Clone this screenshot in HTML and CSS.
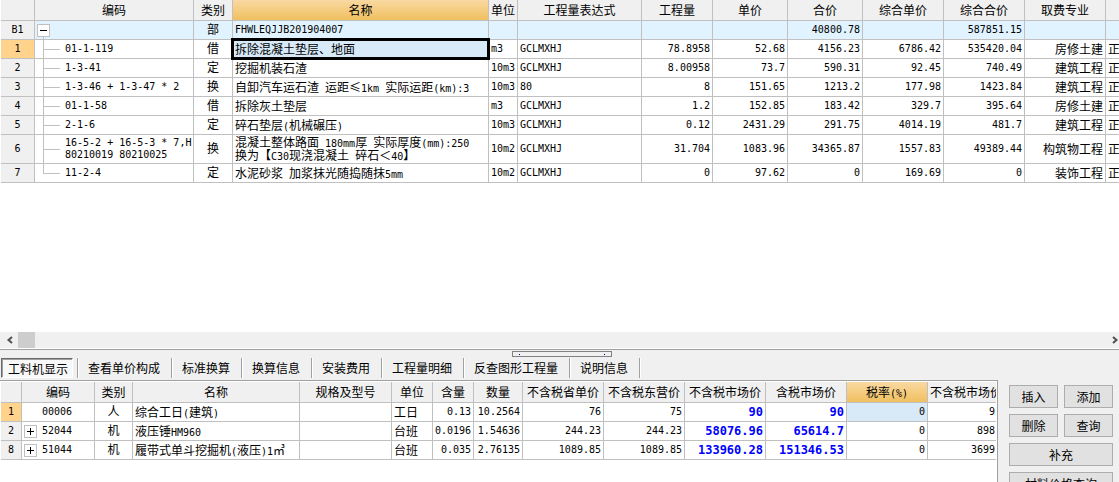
FILE: index.html
```html
<!DOCTYPE html>
<html lang="zh-CN">
<head>
<meta charset="utf-8">
<title>工程量清单</title>
<link rel="stylesheet" href="styles.css">
</head>
<body>
<main class="app">
  <section class="upper">
    <table class="grid">
      <colgroup><col class="w34"><col class="w159"><col class="w39"><col class="w256"><col class="w29"><col class="w124"><col class="w71"><col class="w75"><col class="w75"><col class="w81"><col class="w81"><col class="w81"><col></colgroup>
      <thead>
        <tr><th></th><th>编码</th><th>类别</th><th class="hot">名称</th><th>单位</th><th>工程量表达式</th><th>工程量</th><th>单价</th><th>合价</th><th>综合单价</th><th>综合合价</th><th>取费专业</th><th></th></tr>
      </thead>
      <tbody>
        <tr class="group"><th>B1</th><td class="tree root"><button class="toggle" aria-label="折叠"><svg viewBox="0 0 11 11"><path d="M2 5.5h7"/></svg></button></td><td class="kind">部</td><td>FHWLEQJJB201904007</td><td></td><td></td><td></td><td></td><td class="num">40800.78</td><td></td><td class="num">587851.15</td><td></td><td></td></tr>
        <tr><th class="current">1</th><td class="tree">01-1-119</td><td class="kind">借</td><td class="zh selected">拆除混凝土垫层、地面</td><td>m3</td><td>GCLMXHJ</td><td class="num">78.8958</td><td class="num">52.68</td><td class="num">4156.23</td><td class="num">6786.42</td><td class="num">535420.04</td><td class="zh right">房修土建</td><td class="zh">正</td></tr>
        <tr><th>2</th><td class="tree">1-3-41</td><td class="kind">定</td><td class="zh">挖掘机装石渣</td><td>10m3</td><td>GCLMXHJ</td><td class="num">8.00958</td><td class="num">73.7</td><td class="num">590.31</td><td class="num">92.45</td><td class="num">740.49</td><td class="zh right">建筑工程</td><td class="zh">正</td></tr>
        <tr><th>3</th><td class="tree">1-3-46 + 1-3-47 * 2</td><td class="kind">换</td><td class="zh">自卸汽车运石渣<span class="m"> </span>运距≤<span class="m">1km </span>实际运距<span class="m">(km):3</span></td><td>10m3</td><td>80</td><td class="num">8</td><td class="num">151.65</td><td class="num">1213.2</td><td class="num">177.98</td><td class="num">1423.84</td><td class="zh right">建筑工程</td><td class="zh">正</td></tr>
        <tr><th>4</th><td class="tree">01-1-58</td><td class="kind">借</td><td class="zh">拆除灰土垫层</td><td>m3</td><td>GCLMXHJ</td><td class="num">1.2</td><td class="num">152.85</td><td class="num">183.42</td><td class="num">329.7</td><td class="num">395.64</td><td class="zh right">房修土建</td><td class="zh">正</td></tr>
        <tr><th>5</th><td class="tree">2-1-6</td><td class="kind">定</td><td class="zh">碎石垫层<span class="m">(</span>机械碾压<span class="m">)</span></td><td>10m3</td><td>GCLMXHJ</td><td class="num">0.12</td><td class="num">2431.29</td><td class="num">291.75</td><td class="num">4014.19</td><td class="num">481.7</td><td class="zh right">建筑工程</td><td class="zh">正</td></tr>
        <tr class="tall"><th>6</th><td class="tree">16-5-2 + 16-5-3 * 7,H<br>80210019 80210025</td><td class="kind">换</td><td class="zh">混凝土整体路面<span class="m"> 180mm</span>厚<span class="m"> </span>实际厚度<span class="m">(mm):250</span><br>换为【<span class="m">C30</span>现浇混凝土<span class="m"> </span>碎石＜<span class="m">40</span>】</td><td>10m2</td><td>GCLMXHJ</td><td class="num">31.704</td><td class="num">1083.96</td><td class="num">34365.87</td><td class="num">1557.83</td><td class="num">49389.44</td><td class="zh right">构筑物工程</td><td class="zh">正</td></tr>
        <tr class="last"><th>7</th><td class="tree">11-2-4</td><td class="kind">定</td><td class="zh">水泥砂浆<span class="m"> </span>加浆抹光随捣随抹<span class="m">5mm</span></td><td>10m2</td><td>GCLMXHJ</td><td class="num">0</td><td class="num">97.62</td><td class="num">0</td><td class="num">169.69</td><td class="num">0</td><td class="zh right">装饰工程</td><td class="zh">正</td></tr>
      </tbody>
    </table>
  </section>

  <div class="scrollbar">
    <button class="arrow" aria-label="向左滚动"><svg viewBox="0 0 8 8"><path d="M6 1L2.500 4L6 7"/></svg></button>
    <div class="thumb"></div>
    <button class="arrow end" aria-label="向右滚动"><svg viewBox="0 0 8 8"><path d="M2 1L5.500 4L2 7"/></svg></button>
  </div>

  <section class="lower">
    <div class="splitter"></div>
    <nav class="tabs">
      <div class="first"><button class="active">工料机显示</button></div>
      <button class="tab">查看单价构成</button>
      <button class="tab">标准换算</button>
      <button class="tab">换算信息</button>
      <button class="tab">安装费用</button>
      <button class="tab">工程量明细</button>
      <button class="tab">反查图形工程量</button>
      <button class="tab">说明信息</button>
    </nav>
    <div class="detail">
      <div class="sheet">
        <table class="grid">
          <colgroup><col class="w21"><col class="w73"><col class="w38"><col class="w167"><col class="w92"><col class="w41"><col class="w41"><col class="w49"><col class="w81"><col class="w81"><col class="w81"><col class="w81"><col class="w81"><col></colgroup>
          <thead>
            <tr><th></th><th>编码</th><th>类别</th><th>名称</th><th>规格及型号</th><th>单位</th><th>含量</th><th>数量</th><th>不含税省单价</th><th>不含税东营价</th><th>不含税市场价</th><th>含税市场价</th><th class="hot">税率<span class="m">(%)</span></th><th class="cut">不含税市场价</th></tr>
          </thead>
          <tbody>
            <tr><th class="current">1</th><td class="code">00006</td><td class="kind">人</td><td class="zh">综合工日<span class="m">(</span>建筑<span class="m">)</span></td><td></td><td class="zh">工日</td><td class="num">0.13</td><td class="num">10.2564</td><td class="num">76</td><td class="num">75</td><td class="num price">90</td><td class="num price">90</td><td class="num focus">0</td><td class="num cut">9</td></tr>
            <tr><th>2</th><td class="code"><button class="toggle" aria-label="展开"><svg viewBox="0 0 11 11"><path d="M2 5.500h7M5.500 2v7"/></svg></button>52044</td><td class="kind">机</td><td class="zh">液压锤<span class="m">HM960</span></td><td></td><td class="zh">台班</td><td class="num">0.0196</td><td class="num">1.54636</td><td class="num">244.23</td><td class="num">244.23</td><td class="num price">58076.96</td><td class="num price">65614.7</td><td class="num">0</td><td class="num cut">898</td></tr>
            <tr><th>8</th><td class="code"><button class="toggle" aria-label="展开"><svg viewBox="0 0 11 11"><path d="M2 5.500h7M5.500 2v7"/></svg></button>51044</td><td class="kind">机</td><td class="zh">履带式单斗挖掘机<span class="m">(</span>液压<span class="m">)1</span>㎥</td><td></td><td class="zh">台班</td><td class="num">0.035</td><td class="num">2.76135</td><td class="num">1089.85</td><td class="num">1089.85</td><td class="num price">133960.28</td><td class="num price">151346.53</td><td class="num">0</td><td class="num cut">3699</td></tr>
          </tbody>
        </table>
      </div>
      <aside class="actions">
        <button>插入</button><button>添加</button>
        <button>删除</button><button>查询</button>
        <button class="wide">补充</button>
        <button class="wide">材料价格查询</button>
      </aside>
    </div>
  </section>
</main>
</body>
</html>
```

FILE: styles.css
```css
* { box-sizing: border-box; }
body {
  margin: 0;
  background: #fff;
  color: #000;
  font: 12px/16px "DejaVu Sans Mono", "Noto Sans CJK SC", monospace;
}
button {
  margin: 0;
  padding: 0;
  border: 0;
  border-radius: 0;
  background: none;
  color: inherit;
  font: 12px/16px "Noto Sans CJK SC", sans-serif;
  white-space: nowrap;
}
svg { display: block; fill: none; stroke: #000; }

.app { display: flex; flex-direction: column; height: 100vh; overflow: hidden; }
.upper { flex: 1; min-height: 0; overflow: hidden; padding-left: 1px; }

/* grids */
.grid { width: 100%; table-layout: fixed; border-collapse: separate; border-spacing: 0; }
.grid th, .grid td {
  height: 19px;
  padding: 0 2px;
  border-right: 1px solid #c0c0c0;
  border-bottom: 1px solid #c0c0c0;
  font-weight: normal;
  font-size: 10px;
  text-align: left;
  white-space: nowrap;
  overflow: hidden;
}
.grid tr > :last-child { border-right: 0; }
.grid th { background: #f0f0f0; text-align: center; padding: 0; }
.grid thead th { height: 21px; font-family: "Noto Sans CJK SC", sans-serif; font-size: 12px; }
.grid th.hot { background: linear-gradient(#f9d9a2, #f0c060); }
.grid th.current { background: #ffd38c; }
.grid td.kind { text-align: center; font-size: 12px; }
.grid td.zh { font-family: "Noto Sans CJK SC", sans-serif; font-size: 12px; }
.grid td.right { text-align: right; }
.grid td.num { text-align: right; }
.grid td.price { color: #00f; font-weight: bold; font-size: 12px; }
.grid td.focus { background: #d8eaf8; }
.grid .group td { background: #e1f3ff; }
.grid thead th.cut { text-align: left; padding-left: 2px; }
.grid td.cut { padding-right: 1px; }
.m { font-family: "DejaVu Sans Mono", monospace; font-size: 10px; line-height: 1; white-space: pre; }

.grid td.selected { position: relative; overflow: visible; background: #d8eaf8; }
.selected::after { content: ""; position: absolute; inset: -2px; border: 3px solid #000; }

.grid .tall td, .grid .tall th { height: 29px; line-height: 12px; }

.grid td.tree { position: relative; padding-left: 30px; }
.tree::before { content: ""; position: absolute; left: 8px; top: 0; bottom: -1px; width: 1px; background: #c0c0c0; }
.tree::after { content: ""; position: absolute; left: 8px; top: 50%; width: 17px; height: 1px; background: #c0c0c0; }
.grid td.tree { overflow: visible; }
.grid td.root { padding-left: 2px; }
.root::before { top: 15px; }
.root::after { display: none; }
.last .tree::before { bottom: 50%; }

.toggle { position: relative; display: block; width: 13px; height: 13px; border: 1px solid #c0c0c0; background: #fff; }
.code .toggle { display: inline-block; vertical-align: middle; margin: 0 5px 0 -18px; }
.grid td.code { padding-left: 20px; }
.w21 { width: 21px; } .w29 { width: 29px; } .w34 { width: 34px; } .w38 { width: 38px; }
.w39 { width: 39px; } .w41 { width: 41px; } .w49 { width: 49px; } .w71 { width: 71px; }
.w73 { width: 73px; } .w75 { width: 75px; } .w81 { width: 81px; } .w92 { width: 92px; }
.w124 { width: 124px; } .w159 { width: 159px; } .w167 { width: 167px; } .w256 { width: 256px; }

/* horizontal scrollbar */
.scrollbar { display: flex; align-items: stretch; height: 17px; padding-left: 1px; border-bottom: 1px solid #fff; background: #f0f0f0; }
.arrow { width: 17px; display: grid; place-items: center; }
.arrow svg { width: 8px; height: 8px; stroke: #505050; stroke-width: 2; }
.arrow.end { margin-left: auto; width: 8px; }
.thumb { width: 17px; background: #cdcdcd; }

/* docked detail pane */
.lower { position: relative; display: flex; flex-direction: column; height: 133px; border-top: 1px solid #a0a0a0; background: #f0f0f0; }
.splitter { position: absolute; left: 50%; top: 1px; width: 100px; height: 6px; margin-left: -48px; border: 1px solid #808080; }
.splitter::before, .splitter::after { content: ""; position: absolute; top: 2px; width: 1px; height: 1px; background: #000080; }
.splitter::before { left: 6px; }
.splitter::after { right: 6px; }

.tabs { display: flex; padding: 8px 0 2px 1px; }
.first { padding-right: 4px; border-right: 1px solid #a0a0a0; box-shadow: 1px 0 #fff; }
.active {
  height: 20px;
  padding: 2px 4px 0 6px;
  border: 1px solid;
  border-color: #696969 #fff #fff #696969;
  background: #f8f8f8;
  box-shadow: inset 1px 1px #a0a0a0;
}
.tab { height: 20px; padding: 0 11px 0 10px; border-right: 1px solid #a0a0a0; box-shadow: 1px 0 #fff; }

.detail { flex: 1; min-height: 0; display: flex; }
.sheet { flex: 1; min-width: 0; overflow: hidden; padding: 1px 1px 0 1px; border-top: 1px solid #a0a0a0; border-right: 1px solid #a0a0a0; background: #fff; }
.actions {
  display: grid;
  grid-template-columns: 1fr 1fr;
  grid-auto-rows: 23px;
  gap: 6px;
  width: 121px;
  padding: 5px 6px 0 11px;
  overflow: hidden;
}
.actions button { border: 1px solid #adadad; background: #e1e1e1; }
.actions .wide { grid-column: 1 / -1; }
```
